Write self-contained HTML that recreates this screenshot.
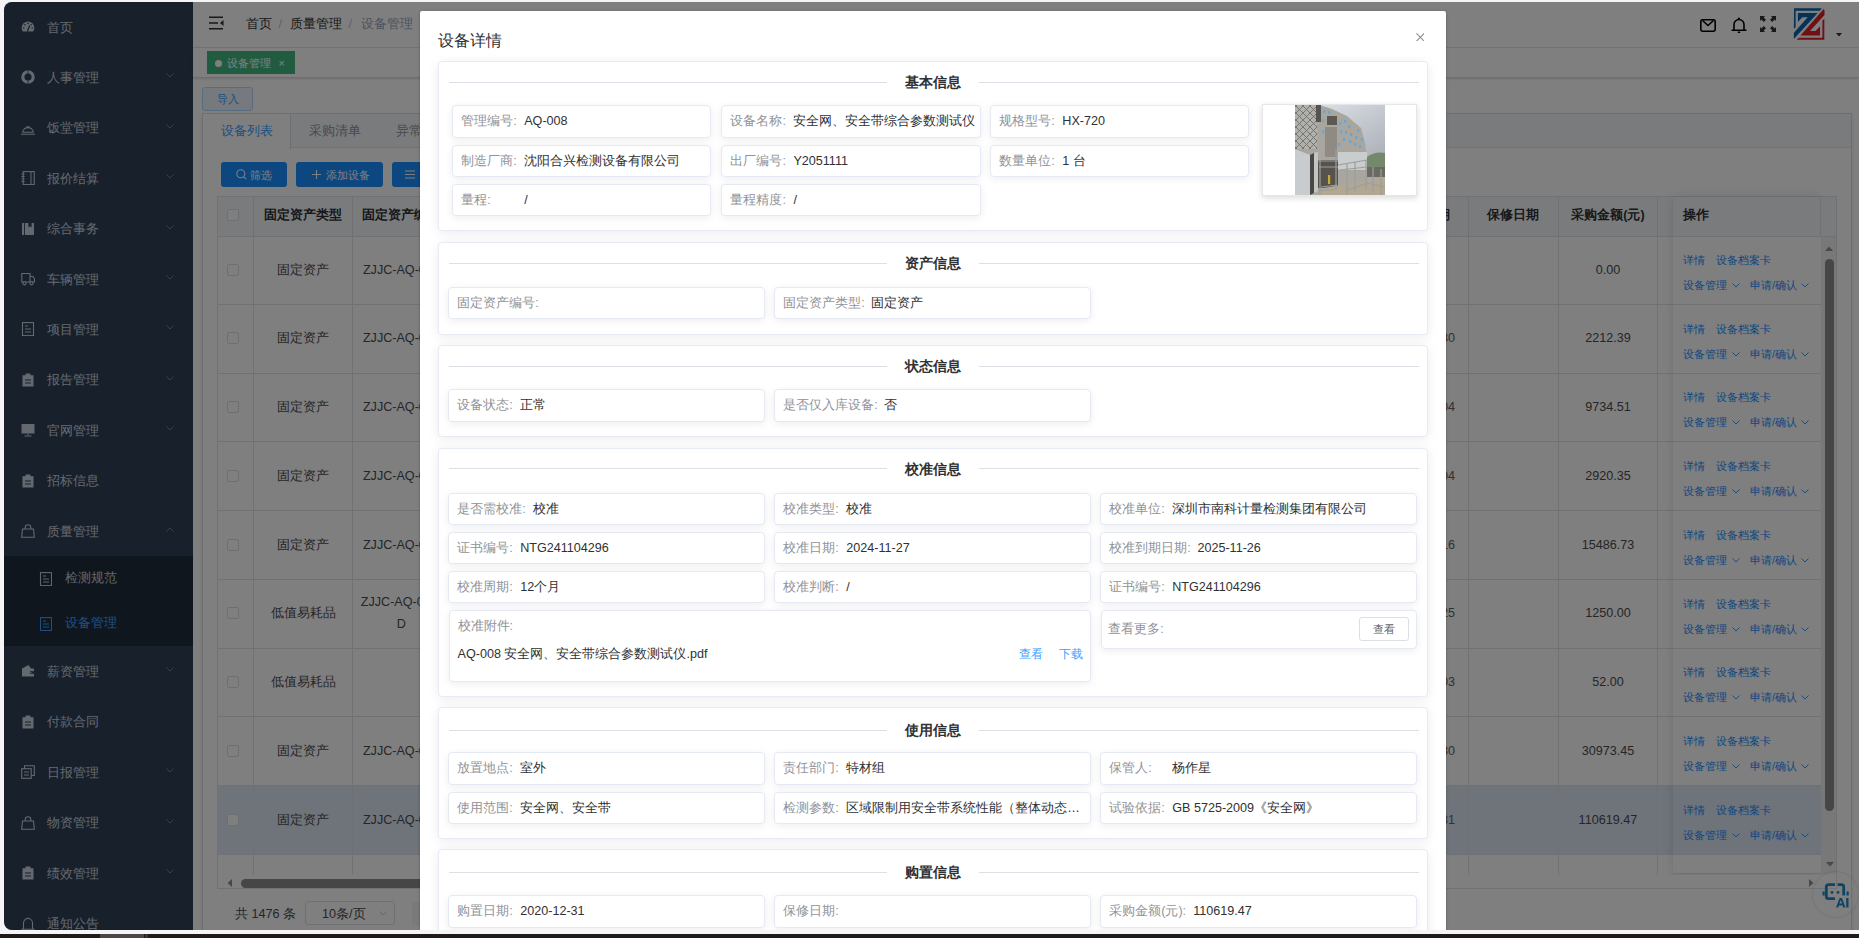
<!DOCTYPE html>
<html><head><meta charset="utf-8">
<style>
*{box-sizing:border-box;margin:0;padding:0}
html,body{width:1859px;height:938px;overflow:hidden;background:#f5f5f5;font-family:"Liberation Sans",sans-serif;font-size:12.6px;color:#303133}
.abs{position:absolute}
#taskbar{position:absolute;left:0;top:934px;width:1859px;height:4px;background:#1f1b1b}
#win{position:absolute;left:4px;top:2px;width:1855px;height:928px;overflow:hidden;border-radius:8px 0 0 8px;background:#fff}
#side{position:absolute;left:0;top:0;width:189px;height:928px;background:#304156}
.mi{position:absolute;left:0;width:189px;height:50.4px;color:#c8d2de;font-size:12.6px;line-height:50.4px}
.mi .t{position:absolute;left:43.3px;top:0.7px}
.mi .ic{position:absolute;left:17px;top:18px;width:14px;height:14px}
.mi .ch{position:absolute;left:162px;top:21px;width:8px;height:5px}
#sub{position:absolute;left:0;top:554.4px;width:189px;height:90px;background:#1f2d3d}
.si{position:absolute;left:0;width:189px;height:45px;line-height:45px;color:#bfcbd9}
.si .t{position:absolute;left:61px}
.si .ic{position:absolute;left:35px;top:16px;width:13px;height:14px}
#main{position:absolute;left:189px;top:0;width:1666px;height:928px;background:#fff}
#overlay{position:absolute;left:0;top:0;width:1855px;height:928px;background:rgba(0,0,0,.5)}
#modal{position:absolute;left:416px;top:9px;width:1026px;height:1100px;background:#fff;border-radius:2px;box-shadow:0 1px 3px rgba(0,0,0,.3)}
.card{position:absolute;background:#fff;border:1px solid #e6ebf5;border-radius:4px;box-shadow:0 2px 12px 0 rgba(0,0,0,.08)}
.sect{font-size:14.4px;font-weight:bold;color:#303133}
.ib{position:absolute;background:#fff;border:1px solid #e4e9f4;border-radius:4px;box-shadow:0 2px 8px 0 rgba(0,0,0,.07);padding-left:8px;white-space:nowrap;overflow:hidden}
.lb{color:#909399;display:inline-block}
.vl{color:#303133}
</style></head><body>
<div id="taskbar"></div><div class="abs" style="left:100px;top:934px;width:43.5px;height:4px;background:#4b4747"></div><div class="abs" style="left:144.7px;top:934px;width:3px;height:4px;background:#3b3737"></div>
<div id="win">
  <div id="side"><div class="mi" style="top:0.0px"><svg class="ic" viewBox="0 0 14 14"><path d="M1.9,11.6 A6.3,6.3 0 1 1 12.1,11.6 Z" fill="currentColor"/><circle cx="7" cy="3.4" r="0.8" fill="#304156"/><circle cx="3.9" cy="4.7" r="0.8" fill="#304156"/><circle cx="10.1" cy="4.7" r="0.8" fill="#304156"/><circle cx="2.8" cy="8" r="0.8" fill="#304156"/><circle cx="11.2" cy="8" r="0.8" fill="#304156"/><path d="M6.4,11.6 L8.6,5.5" stroke="#304156" stroke-width="1.3"/></svg><span class="t">首页</span></div>
<div class="mi" style="top:50.4px"><svg class="ic" viewBox="0 0 14 14"><circle cx="7" cy="7" r="5.2" fill="none" stroke="currentColor" stroke-width="3.2"/><rect x="6.6" y="0" width="0.8" height="14" fill="#304156"/></svg><span class="t">人事管理</span><svg class="ch" viewBox="0 0 8 5"><path d="M0.5,0.5 L4,4 L7.5,0.5" fill="none" stroke="#7c8797" stroke-width="0.9"/></svg></div>
<div class="mi" style="top:100.8px"><svg class="ic" viewBox="0 0 14 14"><path d="M1.8,11.2 A5.2,4.6 0 0 1 12.2,11.2 Z" fill="none" stroke="currentColor" stroke-width="1.1"/><path d="M-0.5,13.2 H14.5" stroke="currentColor" stroke-width="1.1"/><path d="M5.5,5.8 H8.5" stroke="currentColor" stroke-width="1.1"/></svg><span class="t">饭堂管理</span><svg class="ch" viewBox="0 0 8 5"><path d="M0.5,0.5 L4,4 L7.5,0.5" fill="none" stroke="#7c8797" stroke-width="0.9"/></svg></div>
<div class="mi" style="top:151.2px"><svg class="ic" viewBox="0 0 14 14"><rect x="2.2" y="0.6" width="11" height="13" fill="none" stroke="currentColor" stroke-width="1.1"/><path d="M10,0.6 V13.6" stroke="currentColor" stroke-width="1"/><path d="M0.5,3 H3.6 M0.5,5.5 H3.6 M0.5,8 H3.6 M0.5,10.5 H3.6" stroke="currentColor" stroke-width="1"/></svg><span class="t">报价结算</span><svg class="ch" viewBox="0 0 8 5"><path d="M0.5,0.5 L4,4 L7.5,0.5" fill="none" stroke="#7c8797" stroke-width="0.9"/></svg></div>
<div class="mi" style="top:201.6px"><svg class="ic" viewBox="0 0 14 14"><path d="M1,1 H13 V13 H1 Z" fill="currentColor"/><path d="M7.4,1 V5.5 L9,4.3 L10.6,5.5 V1" fill="#304156"/><rect x="3" y="1" width="0.9" height="12" fill="#304156"/></svg><span class="t">综合事务</span><svg class="ch" viewBox="0 0 8 5"><path d="M0.5,0.5 L4,4 L7.5,0.5" fill="none" stroke="#7c8797" stroke-width="0.9"/></svg></div>
<div class="mi" style="top:252.0px"><svg class="ic" viewBox="0 0 14 14"><path d="M0.8,1.5 H9 V10 H0.8 Z M9,4.5 H12 L13.5,7 V10 H9" fill="none" stroke="currentColor" stroke-width="1.1"/><circle cx="3.5" cy="11.3" r="1.6" fill="#304156" stroke="currentColor" stroke-width="1.1"/><circle cx="10.5" cy="11.3" r="1.6" fill="#304156" stroke="currentColor" stroke-width="1.1"/></svg><span class="t">车辆管理</span><svg class="ch" viewBox="0 0 8 5"><path d="M0.5,0.5 L4,4 L7.5,0.5" fill="none" stroke="#7c8797" stroke-width="0.9"/></svg></div>
<div class="mi" style="top:302.4px"><svg class="ic" viewBox="0 0 14 14"><rect x="1.5" y="0.6" width="11" height="13" fill="none" stroke="currentColor" stroke-width="1.1"/><path d="M4,4 H7 M4,7 H10 M4,10 H10" stroke="currentColor" stroke-width="1.1"/></svg><span class="t">项目管理</span><svg class="ch" viewBox="0 0 8 5"><path d="M0.5,0.5 L4,4 L7.5,0.5" fill="none" stroke="#7c8797" stroke-width="0.9"/></svg></div>
<div class="mi" style="top:352.8px"><svg class="ic" viewBox="0 0 14 14"><path d="M1.5,2.2 H12.5 V13.5 H1.5 Z" fill="currentColor"/><rect x="4.5" y="0.5" width="5" height="2.6" fill="currentColor"/><path d="M4,7 H10 M4,10 H10" stroke="#304156" stroke-width="1.1"/></svg><span class="t">报告管理</span><svg class="ch" viewBox="0 0 8 5"><path d="M0.5,0.5 L4,4 L7.5,0.5" fill="none" stroke="#7c8797" stroke-width="0.9"/></svg></div>
<div class="mi" style="top:403.2px"><svg class="ic" viewBox="0 0 14 14"><rect x="0.5" y="1" width="13" height="9.5" fill="currentColor"/><path d="M7,10.5 V12.5 M3.5,13 H10.5" stroke="currentColor" stroke-width="1"/></svg><span class="t">官网管理</span><svg class="ch" viewBox="0 0 8 5"><path d="M0.5,0.5 L4,4 L7.5,0.5" fill="none" stroke="#7c8797" stroke-width="0.9"/></svg></div>
<div class="mi" style="top:453.6px"><svg class="ic" viewBox="0 0 14 14"><path d="M1.5,2.2 H12.5 V13.5 H1.5 Z" fill="currentColor"/><rect x="4.5" y="0.5" width="5" height="2.6" fill="currentColor"/><path d="M4,7 H10 M4,10 H10" stroke="#304156" stroke-width="1.1"/></svg><span class="t">招标信息</span></div>
<div class="mi" style="top:504.0px"><svg class="ic" viewBox="0 0 14 14"><path d="M1.5,5 H12.5 L13.3,13.3 H0.7 Z" fill="none" stroke="currentColor" stroke-width="1.1"/><path d="M4.2,5 V3.5 A2.8,2.8 0 0 1 9.8,3.5 V5" fill="none" stroke="currentColor" stroke-width="1.1"/></svg><span class="t">质量管理</span><svg class="ch" viewBox="0 0 8 5"><path d="M0.5,4.5 L4,1 L7.5,4.5" fill="none" stroke="#7c8797" stroke-width="0.9"/></svg></div>
<div id="sub"><div class="si" style="top:0"><svg class="ic" viewBox="0 0 13 14"><rect x="1.5" y="0.6" width="11" height="13" fill="none" stroke="currentColor" stroke-width="1.1"/><path d="M4,4 H7 M4,7 H10 M4,10 H10" stroke="currentColor" stroke-width="1.1"/></svg><span class="t">检测规范</span></div><div class="si act" style="top:45px;color:#409eff"><svg class="ic" viewBox="0 0 13 14"><rect x="1.5" y="0.6" width="11" height="13" fill="none" stroke="currentColor" stroke-width="1.1"/><path d="M4,4 H7 M4,7 H10 M4,10 H10" stroke="currentColor" stroke-width="1.1"/></svg><span class="t">设备管理</span></div></div>
<div class="mi" style="top:644.4px"><svg class="ic" viewBox="0 0 14 14"><path d="M1,4.5 L7.5,1 L10,4.5 H13 V12.5 H1 Z" fill="currentColor"/><path d="M9,7.2 H13 V9.8 H9 Z" fill="#304156"/><circle cx="10" cy="8.5" r="0.7" fill="currentColor"/></svg><span class="t">薪资管理</span><svg class="ch" viewBox="0 0 8 5"><path d="M0.5,0.5 L4,4 L7.5,0.5" fill="none" stroke="#7c8797" stroke-width="0.9"/></svg></div>
<div class="mi" style="top:694.8px"><svg class="ic" viewBox="0 0 14 14"><path d="M1.5,2.2 H12.5 V13.5 H1.5 Z" fill="currentColor"/><rect x="4.5" y="0.5" width="5" height="2.6" fill="currentColor"/><path d="M4,7 H10 M4,10 H10" stroke="#304156" stroke-width="1.1"/></svg><span class="t">付款合同</span></div>
<div class="mi" style="top:745.2px"><svg class="ic" viewBox="0 0 14 14"><rect x="0.7" y="3.7" width="9.5" height="9.6" fill="none" stroke="currentColor" stroke-width="1.1"/><path d="M3.5,3.7 V0.7 H13.3 V10.5 H10.2" fill="none" stroke="currentColor" stroke-width="1.1"/><path d="M3,7 H8 M3,10 H8" stroke="currentColor" stroke-width="1.1"/></svg><span class="t">日报管理</span><svg class="ch" viewBox="0 0 8 5"><path d="M0.5,0.5 L4,4 L7.5,0.5" fill="none" stroke="#7c8797" stroke-width="0.9"/></svg></div>
<div class="mi" style="top:795.6px"><svg class="ic" viewBox="0 0 14 14"><path d="M1.5,5 H12.5 L13.3,13.3 H0.7 Z" fill="none" stroke="currentColor" stroke-width="1.1"/><path d="M4.2,5 V3.5 A2.8,2.8 0 0 1 9.8,3.5 V5" fill="none" stroke="currentColor" stroke-width="1.1"/></svg><span class="t">物资管理</span><svg class="ch" viewBox="0 0 8 5"><path d="M0.5,0.5 L4,4 L7.5,0.5" fill="none" stroke="#7c8797" stroke-width="0.9"/></svg></div>
<div class="mi" style="top:846.0px"><svg class="ic" viewBox="0 0 14 14"><path d="M1.5,2.2 H12.5 V13.5 H1.5 Z" fill="currentColor"/><rect x="4.5" y="0.5" width="5" height="2.6" fill="currentColor"/><path d="M4,7 H10 M4,10 H10" stroke="#304156" stroke-width="1.1"/></svg><span class="t">绩效管理</span><svg class="ch" viewBox="0 0 8 5"><path d="M0.5,0.5 L4,4 L7.5,0.5" fill="none" stroke="#7c8797" stroke-width="0.9"/></svg></div>
<div class="mi" style="top:896.4px"><svg class="ic" viewBox="0 0 14 14"><path d="M2.5,13 V7 A4.5,4.5 0 0 1 11.5,7 V13" fill="none" stroke="currentColor" stroke-width="1.1"/><path d="M0.3,13.3 H13.7" stroke="currentColor" stroke-width="1.1"/><path d="M7,1.5 V2.5" stroke="currentColor" stroke-width="1.1"/></svg><span class="t">通知公告</span></div></div>
  <div id="main"><div class="abs" style="left:0.00px;top:0.00px;width:1666.00px;height:46.00px;background:#fff;border-bottom:1px solid #ececec"></div>
<svg class="abs" style="left:16px;top:14px" width="15" height="14" viewBox="0 0 15 14"><path d="M0,1.3 H14 M0,7 H9 M0,12.7 H14" stroke="#303133" stroke-width="1.6"/><path d="M14.5,4 L11,7 L14.5,10 Z" fill="#303133"/></svg>
<div class="abs" style="left:52.80px;top:13.50px;line-height:16px;white-space:nowrap;color:#303133">首页</div>
<div class="abs" style="left:85.50px;top:13.50px;line-height:16px;white-space:nowrap;color:#c0c4cc">/</div>
<div class="abs" style="left:97.00px;top:13.50px;line-height:16px;white-space:nowrap;color:#303133">质量管理</div>
<div class="abs" style="left:155.50px;top:13.50px;line-height:16px;white-space:nowrap;color:#c0c4cc">/</div>
<div class="abs" style="left:167.70px;top:13.50px;line-height:16px;white-space:nowrap;color:#97a8be">设备管理</div>
<svg class="abs" style="left:1507px;top:17px" width="16" height="13" viewBox="0 0 16 13"><rect x="0.8" y="0.8" width="14.4" height="11.4" rx="1.6" fill="none" stroke="#000" stroke-width="1.6"/><path d="M2.5,1.5 L8,6.5 L13.5,1.5" fill="none" stroke="#000" stroke-width="1.6"/></svg>
<svg class="abs" style="left:1538px;top:15px" width="16" height="16" viewBox="0 0 16 16"><path d="M3,13 V7.5 A5,5 0 0 1 13,7.5 V13" fill="none" stroke="#000" stroke-width="1.6"/><path d="M0.5,13.2 H15.5" stroke="#000" stroke-width="1.6"/><circle cx="8" cy="1.6" r="1.1" fill="#000"/><path d="M6.8,15.3 H9.2" stroke="#000" stroke-width="1.4"/></svg>
<svg class="abs" style="left:1567px;top:14px" width="16" height="16" viewBox="0 0 16 16"><g fill="#303133"><path d="M0,0 H5 L3.6,1.4 L6,3.8 L3.8,6 L1.4,3.6 L0,5 Z"/><path d="M16,0 V5 L14.6,3.6 L12.2,6 L10,3.8 L12.4,1.4 L11,0 Z"/><path d="M0,16 V11 L1.4,12.4 L3.8,10 L6,12.2 L3.6,14.6 L5,16 Z"/><path d="M16,16 H11 L12.4,14.6 L10,12.2 L12.2,10 L14.6,12.4 L16,11 Z"/></g></svg>
<svg class="abs" style="left:1597px;top:3px" width="40" height="40" viewBox="0 0 938 938"><path d="M95,75 H745 L700,132 H132 V520 L90,565 Z" fill="#0a66b0"/><path d="M185,185 H650 L90,800 V650 L415,285 H290 L185,400 Z" fill="#0a66b0"/><path d="M790,95 L810,130 V235 L470,610 H600 L705,500 V715 H245 Z" fill="#e01e28"/><path d="M805,320 V815 H155 L205,770 H760 V365 Z" fill="#e01e28"/></svg>
<svg class="abs" style="left:1643px;top:31px" width="6" height="4" viewBox="0 0 6 4"><path d="M0,0 H6 L3,3.5 Z" fill="#303133"/></svg>
<div class="abs" style="left:0.00px;top:46.00px;width:1666.00px;height:30.00px;background:#fff;border-bottom:1px solid #d8dce5;box-shadow:0 1px 3px 0 rgba(0,0,0,.12),0 0 3px 0 rgba(0,0,0,.04)"></div>
<div class="abs" style="left:14.00px;top:49.00px;width:88.00px;height:23.00px;background:#42b983;border:1px solid #42b983"></div>
<div class="abs" style="left:22px;top:58px;width:7px;height:7px;border-radius:50%;background:#fff"></div>
<div class="abs" style="left:34.00px;top:53.00px;line-height:16px;white-space:nowrap;color:#fff;font-size:10.8px">设备管理</div>
<div class="abs" style="left:85.50px;top:53.00px;line-height:16px;white-space:nowrap;color:#fff;font-size:10.8px">×</div>
<div class="abs" style="left:9.00px;top:85.00px;width:51.00px;height:24.00px;background:#ecf5ff;border:1px solid #b3d8ff;border-radius:3px"></div>
<div class="abs" style="left:9.50px;top:89.00px;width:50px;text-align:center;line-height:16px;white-space:nowrap;color:#409eff;font-size:10.8px">导入</div>
<div class="abs" style="left:9.00px;top:110.50px;width:1650.00px;height:900.00px;background:#fff;border:1px solid #dcdfe6;box-shadow:0 2px 4px 0 rgba(0,0,0,.12)"></div>
<div class="abs" style="left:10.00px;top:111.50px;width:1648.00px;height:34.50px;background:#f5f7fa;border-bottom:1px solid #e4e7ed"></div>
<div class="abs" style="left:10.00px;top:111.50px;width:88.00px;height:35.00px;background:#fff;border-right:1px solid #dcdfe6"></div>
<div class="abs" style="left:27.90px;top:120.50px;line-height:16px;white-space:nowrap;color:#409eff">设备列表</div>
<div class="abs" style="left:115.80px;top:120.50px;line-height:16px;white-space:nowrap;color:#909399">采购清单</div>
<div class="abs" style="left:203.20px;top:120.50px;line-height:16px;white-space:nowrap;color:#909399">异常处理</div>
<div class="abs" style="left:28.00px;top:160.00px;width:66.00px;height:25.00px;background:#1890ff;border-radius:3px"></div>
<svg class="abs" style="left:42.5px;top:167px" width="11" height="11" viewBox="0 0 11 11"><circle cx="4.8" cy="4.8" r="4" fill="none" stroke="#fff" stroke-width="1.1"/><path d="M7.8,7.8 L10.2,10.2" stroke="#fff" stroke-width="1.1"/></svg>
<div class="abs" style="left:57.40px;top:164.50px;line-height:16px;white-space:nowrap;color:#fff;font-size:10.8px">筛选</div>
<div class="abs" style="left:103.00px;top:160.00px;width:87.00px;height:25.00px;background:#1890ff;border-radius:3px"></div>
<svg class="abs" style="left:118.5px;top:168px" width="9" height="9" viewBox="0 0 9 9"><path d="M4.5,0 V9 M0,4.5 H9" stroke="#fff" stroke-width="1.1"/></svg>
<div class="abs" style="left:132.60px;top:164.50px;line-height:16px;white-space:nowrap;color:#fff;font-size:10.8px">添加设备</div>
<div class="abs" style="left:199.00px;top:160.00px;width:90.00px;height:25.00px;background:#1890ff;border-radius:3px"></div>
<svg class="abs" style="left:212px;top:168px" width="10" height="9" viewBox="0 0 10 9"><path d="M0,1 H10 M0,4.5 H10 M0,8 H10" stroke="#fff" stroke-width="1.2"/></svg>
<div class="abs" style="left:24.00px;top:194.20px;width:1619.50px;height:692.80px;background:#fff;border:1px solid #dfe3ea"></div>
<div class="abs" style="left:25.00px;top:234.00px;width:1617.50px;height:68.75px;background:#fff;border-bottom:1px solid #dfe3ea"></div>
<div class="abs" style="left:25.00px;top:302.75px;width:1617.50px;height:68.75px;background:#fff;border-bottom:1px solid #dfe3ea"></div>
<div class="abs" style="left:25.00px;top:371.50px;width:1617.50px;height:68.75px;background:#fff;border-bottom:1px solid #dfe3ea"></div>
<div class="abs" style="left:25.00px;top:440.25px;width:1617.50px;height:68.75px;background:#fff;border-bottom:1px solid #dfe3ea"></div>
<div class="abs" style="left:25.00px;top:509.00px;width:1617.50px;height:68.75px;background:#fff;border-bottom:1px solid #dfe3ea"></div>
<div class="abs" style="left:25.00px;top:577.75px;width:1617.50px;height:68.75px;background:#fff;border-bottom:1px solid #dfe3ea"></div>
<div class="abs" style="left:25.00px;top:646.50px;width:1617.50px;height:68.75px;background:#fff;border-bottom:1px solid #dfe3ea"></div>
<div class="abs" style="left:25.00px;top:715.25px;width:1617.50px;height:68.75px;background:#fff;border-bottom:1px solid #dfe3ea"></div>
<div class="abs" style="left:25.00px;top:784.00px;width:1617.50px;height:68.75px;background:#dee8f6;border-bottom:1px solid #dfe3ea"></div>
<div class="abs" style="left:25.00px;top:852.75px;width:1617.50px;height:20.25px;background:#fff;"></div>
<div class="abs" style="left:25.00px;top:195.20px;width:1617.50px;height:39.80px;background:#f5f7fa;border-bottom:1px solid #dfe3ea"></div>
<div class="abs" style="left:60.00px;top:194.20px;width:1.00px;height:678.80px;background:#dfe3ea"></div>
<div class="abs" style="left:159.00px;top:194.20px;width:1.00px;height:678.80px;background:#dfe3ea"></div>
<div class="abs" style="left:256.80px;top:194.20px;width:1.00px;height:678.80px;background:#dfe3ea"></div>
<div class="abs" style="left:1274.90px;top:194.20px;width:1.00px;height:678.80px;background:#dfe3ea"></div>
<div class="abs" style="left:1364.90px;top:194.20px;width:1.00px;height:678.80px;background:#dfe3ea"></div>
<div class="abs" style="left:1463.90px;top:194.20px;width:1.00px;height:678.80px;background:#dfe3ea"></div>
<div class="abs" style="left:10.00px;top:205.10px;width:200px;text-align:center;line-height:16px;white-space:nowrap;color:#303133;font-weight:bold">固定资产类型</div>
<div class="abs" style="left:108.40px;top:205.10px;width:200px;text-align:center;line-height:16px;white-space:nowrap;color:#303133;font-weight:bold">固定资产编号</div>
<div class="abs" style="left:1220.40px;top:205.10px;width:200px;text-align:center;line-height:16px;white-space:nowrap;color:#303133;font-weight:bold">保修日期</div>
<div class="abs" style="left:1314.90px;top:205.10px;width:200px;text-align:center;line-height:16px;white-space:nowrap;color:#303133;font-weight:bold">采购金额(元)</div>
<div class="abs" style="left:1156.5px;top:205.10px;width:100px;text-align:right;line-height:16px;color:#303133;font-weight:bold">出厂日期</div>
<div class="abs" style="left:33.80px;top:207.00px;width:12.00px;height:12.00px;background:#fff;border:1px solid #dcdfe6;border-radius:2px"></div>
<div class="abs" style="left:33.80px;top:261.57px;width:12.00px;height:12.00px;background:#fff;border:1px solid #dcdfe6;border-radius:2px"></div>
<div class="abs" style="left:10.00px;top:259.68px;width:200px;text-align:center;line-height:16px;white-space:nowrap;color:#4a4c50">固定资产</div>
<div class="abs" style="left:108.40px;top:259.68px;width:200px;text-align:center;line-height:16px;white-space:nowrap;color:#4a4c50">ZJJC-AQ-008</div>
<div class="abs" style="left:1314.90px;top:259.68px;width:200px;text-align:center;line-height:16px;white-space:nowrap;color:#4a4c50">0.00</div>
<div class="abs" style="left:33.80px;top:330.32px;width:12.00px;height:12.00px;background:#fff;border:1px solid #dcdfe6;border-radius:2px"></div>
<div class="abs" style="left:10.00px;top:328.43px;width:200px;text-align:center;line-height:16px;white-space:nowrap;color:#4a4c50">固定资产</div>
<div class="abs" style="left:108.40px;top:328.43px;width:200px;text-align:center;line-height:16px;white-space:nowrap;color:#4a4c50">ZJJC-AQ-007</div>
<div class="abs" style="left:1162px;top:328.43px;width:100px;text-align:right;line-height:16px;color:#606266">2020-12-30</div>
<div class="abs" style="left:1314.90px;top:328.43px;width:200px;text-align:center;line-height:16px;white-space:nowrap;color:#4a4c50">2212.39</div>
<div class="abs" style="left:33.80px;top:399.07px;width:12.00px;height:12.00px;background:#fff;border:1px solid #dcdfe6;border-radius:2px"></div>
<div class="abs" style="left:10.00px;top:397.18px;width:200px;text-align:center;line-height:16px;white-space:nowrap;color:#4a4c50">固定资产</div>
<div class="abs" style="left:108.40px;top:397.18px;width:200px;text-align:center;line-height:16px;white-space:nowrap;color:#4a4c50">ZJJC-AQ-006</div>
<div class="abs" style="left:1162px;top:397.18px;width:100px;text-align:right;line-height:16px;color:#606266">2020-12-04</div>
<div class="abs" style="left:1314.90px;top:397.18px;width:200px;text-align:center;line-height:16px;white-space:nowrap;color:#4a4c50">9734.51</div>
<div class="abs" style="left:33.80px;top:467.82px;width:12.00px;height:12.00px;background:#fff;border:1px solid #dcdfe6;border-radius:2px"></div>
<div class="abs" style="left:10.00px;top:465.93px;width:200px;text-align:center;line-height:16px;white-space:nowrap;color:#4a4c50">固定资产</div>
<div class="abs" style="left:108.40px;top:465.93px;width:200px;text-align:center;line-height:16px;white-space:nowrap;color:#4a4c50">ZJJC-AQ-005</div>
<div class="abs" style="left:1162px;top:465.93px;width:100px;text-align:right;line-height:16px;color:#606266">2020-12-04</div>
<div class="abs" style="left:1314.90px;top:465.93px;width:200px;text-align:center;line-height:16px;white-space:nowrap;color:#4a4c50">2920.35</div>
<div class="abs" style="left:33.80px;top:536.57px;width:12.00px;height:12.00px;background:#fff;border:1px solid #dcdfe6;border-radius:2px"></div>
<div class="abs" style="left:10.00px;top:534.67px;width:200px;text-align:center;line-height:16px;white-space:nowrap;color:#4a4c50">固定资产</div>
<div class="abs" style="left:108.40px;top:534.67px;width:200px;text-align:center;line-height:16px;white-space:nowrap;color:#4a4c50">ZJJC-AQ-004</div>
<div class="abs" style="left:1162px;top:534.67px;width:100px;text-align:right;line-height:16px;color:#606266">2020-12-16</div>
<div class="abs" style="left:1314.90px;top:534.67px;width:200px;text-align:center;line-height:16px;white-space:nowrap;color:#4a4c50">15486.73</div>
<div class="abs" style="left:33.80px;top:605.32px;width:12.00px;height:12.00px;background:#fff;border:1px solid #dcdfe6;border-radius:2px"></div>
<div class="abs" style="left:10.00px;top:603.42px;width:200px;text-align:center;line-height:16px;white-space:nowrap;color:#4a4c50">低值易耗品</div>
<div class="abs" style="left:108.40px;top:592.42px;width:200px;text-align:center;line-height:16px;white-space:nowrap;color:#4a4c50">ZJJC-AQ-003-</div>
<div class="abs" style="left:108.40px;top:614.42px;width:200px;text-align:center;line-height:16px;white-space:nowrap;color:#4a4c50">D</div>
<div class="abs" style="left:1162px;top:603.42px;width:100px;text-align:right;line-height:16px;color:#606266">2020-12-25</div>
<div class="abs" style="left:1314.90px;top:603.42px;width:200px;text-align:center;line-height:16px;white-space:nowrap;color:#4a4c50">1250.00</div>
<div class="abs" style="left:33.80px;top:674.07px;width:12.00px;height:12.00px;background:#fff;border:1px solid #dcdfe6;border-radius:2px"></div>
<div class="abs" style="left:10.00px;top:672.17px;width:200px;text-align:center;line-height:16px;white-space:nowrap;color:#4a4c50">低值易耗品</div>
<div class="abs" style="left:1162px;top:672.17px;width:100px;text-align:right;line-height:16px;color:#606266">2020-12-03</div>
<div class="abs" style="left:1314.90px;top:672.17px;width:200px;text-align:center;line-height:16px;white-space:nowrap;color:#4a4c50">52.00</div>
<div class="abs" style="left:33.80px;top:742.82px;width:12.00px;height:12.00px;background:#fff;border:1px solid #dcdfe6;border-radius:2px"></div>
<div class="abs" style="left:10.00px;top:740.92px;width:200px;text-align:center;line-height:16px;white-space:nowrap;color:#4a4c50">固定资产</div>
<div class="abs" style="left:108.40px;top:740.92px;width:200px;text-align:center;line-height:16px;white-space:nowrap;color:#4a4c50">ZJJC-AQ-002</div>
<div class="abs" style="left:1162px;top:740.92px;width:100px;text-align:right;line-height:16px;color:#606266">2020-12-30</div>
<div class="abs" style="left:1314.90px;top:740.92px;width:200px;text-align:center;line-height:16px;white-space:nowrap;color:#4a4c50">30973.45</div>
<div class="abs" style="left:33.80px;top:811.57px;width:12.00px;height:12.00px;background:#fff;border:1px solid #dcdfe6;border-radius:2px"></div>
<div class="abs" style="left:10.00px;top:809.67px;width:200px;text-align:center;line-height:16px;white-space:nowrap;color:#4a4c50">固定资产</div>
<div class="abs" style="left:108.40px;top:809.67px;width:200px;text-align:center;line-height:16px;white-space:nowrap;color:#4a4c50">ZJJC-AQ-001</div>
<div class="abs" style="left:1162px;top:809.67px;width:100px;text-align:right;line-height:16px;color:#606266">2020-12-31</div>
<div class="abs" style="left:1314.90px;top:809.67px;width:200px;text-align:center;line-height:16px;white-space:nowrap;color:#4a4c50">110619.47</div>
<div class="abs" style="left:1479.50px;top:195.20px;width:148.50px;height:676.80px;background:#fff;box-shadow:0 0 10px rgba(0,0,0,.12);overflow:hidden"></div>
<div class="abs" style="left:1479.50px;top:234.00px;width:148.50px;height:68.75px;background:#fff;border-bottom:1px solid #dfe3ea"></div>
<div class="abs" style="left:1479.50px;top:302.75px;width:148.50px;height:68.75px;background:#fff;border-bottom:1px solid #dfe3ea"></div>
<div class="abs" style="left:1479.50px;top:371.50px;width:148.50px;height:68.75px;background:#fff;border-bottom:1px solid #dfe3ea"></div>
<div class="abs" style="left:1479.50px;top:440.25px;width:148.50px;height:68.75px;background:#fff;border-bottom:1px solid #dfe3ea"></div>
<div class="abs" style="left:1479.50px;top:509.00px;width:148.50px;height:68.75px;background:#fff;border-bottom:1px solid #dfe3ea"></div>
<div class="abs" style="left:1479.50px;top:577.75px;width:148.50px;height:68.75px;background:#fff;border-bottom:1px solid #dfe3ea"></div>
<div class="abs" style="left:1479.50px;top:646.50px;width:148.50px;height:68.75px;background:#fff;border-bottom:1px solid #dfe3ea"></div>
<div class="abs" style="left:1479.50px;top:715.25px;width:148.50px;height:68.75px;background:#fff;border-bottom:1px solid #dfe3ea"></div>
<div class="abs" style="left:1479.50px;top:784.00px;width:148.50px;height:68.75px;background:#dee8f6;border-bottom:1px solid #dfe3ea"></div>
<div class="abs" style="left:1479.50px;top:852.75px;width:148.50px;height:19.25px;background:#fff;border-bottom:1px solid #dfe3ea"></div>
<div class="abs" style="left:1479.50px;top:195.20px;width:148.50px;height:39.80px;background:#f5f7fa;border-bottom:1px solid #dfe3ea;border-right:1px solid #dfe3ea"></div>
<div class="abs" style="left:1489.70px;top:205.10px;line-height:16px;white-space:nowrap;color:#303133;font-weight:bold">操作</div>
<div class="abs" style="left:1479.50px;top:194.20px;width:148.50px;height:677.80px;overflow:hidden">
<div class="abs" style="left:10.90px;top:55.80px;line-height:16px;white-space:nowrap;color:#1890ff;font-size:10.8px">详情</div><div class="abs" style="left:43.60px;top:55.80px;line-height:16px;white-space:nowrap;color:#1890ff;font-size:10.8px">设备档案卡</div><div class="abs" style="left:10.20px;top:80.80px;line-height:16px;white-space:nowrap;color:#1890ff;font-size:10.8px">设备管理</div><svg class="abs" style="left:59.20px;top:86.80px" width="8" height="5" viewBox="0 0 8 5"><path d="M0.5,0.5 L4,4 L7.5,0.5" fill="none" stroke="#1890ff" stroke-width="0.9"/></svg><div class="abs" style="left:77.50px;top:80.80px;line-height:16px;white-space:nowrap;color:#1890ff;font-size:10.8px">申请/确认</div><svg class="abs" style="left:128.00px;top:86.80px" width="8" height="5" viewBox="0 0 8 5"><path d="M0.5,0.5 L4,4 L7.5,0.5" fill="none" stroke="#1890ff" stroke-width="0.9"/></svg><div class="abs" style="left:10.90px;top:124.55px;line-height:16px;white-space:nowrap;color:#1890ff;font-size:10.8px">详情</div><div class="abs" style="left:43.60px;top:124.55px;line-height:16px;white-space:nowrap;color:#1890ff;font-size:10.8px">设备档案卡</div><div class="abs" style="left:10.20px;top:149.55px;line-height:16px;white-space:nowrap;color:#1890ff;font-size:10.8px">设备管理</div><svg class="abs" style="left:59.20px;top:155.55px" width="8" height="5" viewBox="0 0 8 5"><path d="M0.5,0.5 L4,4 L7.5,0.5" fill="none" stroke="#1890ff" stroke-width="0.9"/></svg><div class="abs" style="left:77.50px;top:149.55px;line-height:16px;white-space:nowrap;color:#1890ff;font-size:10.8px">申请/确认</div><svg class="abs" style="left:128.00px;top:155.55px" width="8" height="5" viewBox="0 0 8 5"><path d="M0.5,0.5 L4,4 L7.5,0.5" fill="none" stroke="#1890ff" stroke-width="0.9"/></svg><div class="abs" style="left:10.90px;top:193.30px;line-height:16px;white-space:nowrap;color:#1890ff;font-size:10.8px">详情</div><div class="abs" style="left:43.60px;top:193.30px;line-height:16px;white-space:nowrap;color:#1890ff;font-size:10.8px">设备档案卡</div><div class="abs" style="left:10.20px;top:218.30px;line-height:16px;white-space:nowrap;color:#1890ff;font-size:10.8px">设备管理</div><svg class="abs" style="left:59.20px;top:224.30px" width="8" height="5" viewBox="0 0 8 5"><path d="M0.5,0.5 L4,4 L7.5,0.5" fill="none" stroke="#1890ff" stroke-width="0.9"/></svg><div class="abs" style="left:77.50px;top:218.30px;line-height:16px;white-space:nowrap;color:#1890ff;font-size:10.8px">申请/确认</div><svg class="abs" style="left:128.00px;top:224.30px" width="8" height="5" viewBox="0 0 8 5"><path d="M0.5,0.5 L4,4 L7.5,0.5" fill="none" stroke="#1890ff" stroke-width="0.9"/></svg><div class="abs" style="left:10.90px;top:262.05px;line-height:16px;white-space:nowrap;color:#1890ff;font-size:10.8px">详情</div><div class="abs" style="left:43.60px;top:262.05px;line-height:16px;white-space:nowrap;color:#1890ff;font-size:10.8px">设备档案卡</div><div class="abs" style="left:10.20px;top:287.05px;line-height:16px;white-space:nowrap;color:#1890ff;font-size:10.8px">设备管理</div><svg class="abs" style="left:59.20px;top:293.05px" width="8" height="5" viewBox="0 0 8 5"><path d="M0.5,0.5 L4,4 L7.5,0.5" fill="none" stroke="#1890ff" stroke-width="0.9"/></svg><div class="abs" style="left:77.50px;top:287.05px;line-height:16px;white-space:nowrap;color:#1890ff;font-size:10.8px">申请/确认</div><svg class="abs" style="left:128.00px;top:293.05px" width="8" height="5" viewBox="0 0 8 5"><path d="M0.5,0.5 L4,4 L7.5,0.5" fill="none" stroke="#1890ff" stroke-width="0.9"/></svg><div class="abs" style="left:10.90px;top:330.80px;line-height:16px;white-space:nowrap;color:#1890ff;font-size:10.8px">详情</div><div class="abs" style="left:43.60px;top:330.80px;line-height:16px;white-space:nowrap;color:#1890ff;font-size:10.8px">设备档案卡</div><div class="abs" style="left:10.20px;top:355.80px;line-height:16px;white-space:nowrap;color:#1890ff;font-size:10.8px">设备管理</div><svg class="abs" style="left:59.20px;top:361.80px" width="8" height="5" viewBox="0 0 8 5"><path d="M0.5,0.5 L4,4 L7.5,0.5" fill="none" stroke="#1890ff" stroke-width="0.9"/></svg><div class="abs" style="left:77.50px;top:355.80px;line-height:16px;white-space:nowrap;color:#1890ff;font-size:10.8px">申请/确认</div><svg class="abs" style="left:128.00px;top:361.80px" width="8" height="5" viewBox="0 0 8 5"><path d="M0.5,0.5 L4,4 L7.5,0.5" fill="none" stroke="#1890ff" stroke-width="0.9"/></svg><div class="abs" style="left:10.90px;top:399.55px;line-height:16px;white-space:nowrap;color:#1890ff;font-size:10.8px">详情</div><div class="abs" style="left:43.60px;top:399.55px;line-height:16px;white-space:nowrap;color:#1890ff;font-size:10.8px">设备档案卡</div><div class="abs" style="left:10.20px;top:424.55px;line-height:16px;white-space:nowrap;color:#1890ff;font-size:10.8px">设备管理</div><svg class="abs" style="left:59.20px;top:430.55px" width="8" height="5" viewBox="0 0 8 5"><path d="M0.5,0.5 L4,4 L7.5,0.5" fill="none" stroke="#1890ff" stroke-width="0.9"/></svg><div class="abs" style="left:77.50px;top:424.55px;line-height:16px;white-space:nowrap;color:#1890ff;font-size:10.8px">申请/确认</div><svg class="abs" style="left:128.00px;top:430.55px" width="8" height="5" viewBox="0 0 8 5"><path d="M0.5,0.5 L4,4 L7.5,0.5" fill="none" stroke="#1890ff" stroke-width="0.9"/></svg><div class="abs" style="left:10.90px;top:468.30px;line-height:16px;white-space:nowrap;color:#1890ff;font-size:10.8px">详情</div><div class="abs" style="left:43.60px;top:468.30px;line-height:16px;white-space:nowrap;color:#1890ff;font-size:10.8px">设备档案卡</div><div class="abs" style="left:10.20px;top:493.30px;line-height:16px;white-space:nowrap;color:#1890ff;font-size:10.8px">设备管理</div><svg class="abs" style="left:59.20px;top:499.30px" width="8" height="5" viewBox="0 0 8 5"><path d="M0.5,0.5 L4,4 L7.5,0.5" fill="none" stroke="#1890ff" stroke-width="0.9"/></svg><div class="abs" style="left:77.50px;top:493.30px;line-height:16px;white-space:nowrap;color:#1890ff;font-size:10.8px">申请/确认</div><svg class="abs" style="left:128.00px;top:499.30px" width="8" height="5" viewBox="0 0 8 5"><path d="M0.5,0.5 L4,4 L7.5,0.5" fill="none" stroke="#1890ff" stroke-width="0.9"/></svg><div class="abs" style="left:10.90px;top:537.05px;line-height:16px;white-space:nowrap;color:#1890ff;font-size:10.8px">详情</div><div class="abs" style="left:43.60px;top:537.05px;line-height:16px;white-space:nowrap;color:#1890ff;font-size:10.8px">设备档案卡</div><div class="abs" style="left:10.20px;top:562.05px;line-height:16px;white-space:nowrap;color:#1890ff;font-size:10.8px">设备管理</div><svg class="abs" style="left:59.20px;top:568.05px" width="8" height="5" viewBox="0 0 8 5"><path d="M0.5,0.5 L4,4 L7.5,0.5" fill="none" stroke="#1890ff" stroke-width="0.9"/></svg><div class="abs" style="left:77.50px;top:562.05px;line-height:16px;white-space:nowrap;color:#1890ff;font-size:10.8px">申请/确认</div><svg class="abs" style="left:128.00px;top:568.05px" width="8" height="5" viewBox="0 0 8 5"><path d="M0.5,0.5 L4,4 L7.5,0.5" fill="none" stroke="#1890ff" stroke-width="0.9"/></svg><div class="abs" style="left:10.90px;top:605.80px;line-height:16px;white-space:nowrap;color:#1890ff;font-size:10.8px">详情</div><div class="abs" style="left:43.60px;top:605.80px;line-height:16px;white-space:nowrap;color:#1890ff;font-size:10.8px">设备档案卡</div><div class="abs" style="left:10.20px;top:630.80px;line-height:16px;white-space:nowrap;color:#1890ff;font-size:10.8px">设备管理</div><svg class="abs" style="left:59.20px;top:636.80px" width="8" height="5" viewBox="0 0 8 5"><path d="M0.5,0.5 L4,4 L7.5,0.5" fill="none" stroke="#1890ff" stroke-width="0.9"/></svg><div class="abs" style="left:77.50px;top:630.80px;line-height:16px;white-space:nowrap;color:#1890ff;font-size:10.8px">申请/确认</div><svg class="abs" style="left:128.00px;top:636.80px" width="8" height="5" viewBox="0 0 8 5"><path d="M0.5,0.5 L4,4 L7.5,0.5" fill="none" stroke="#1890ff" stroke-width="0.9"/></svg><div class="abs" style="left:10.90px;top:674.55px;line-height:16px;white-space:nowrap;color:#1890ff;font-size:10.8px">详情</div><div class="abs" style="left:43.60px;top:674.55px;line-height:16px;white-space:nowrap;color:#1890ff;font-size:10.8px">设备档案卡</div><div class="abs" style="left:10.20px;top:699.55px;line-height:16px;white-space:nowrap;color:#1890ff;font-size:10.8px">设备管理</div><svg class="abs" style="left:59.20px;top:705.55px" width="8" height="5" viewBox="0 0 8 5"><path d="M0.5,0.5 L4,4 L7.5,0.5" fill="none" stroke="#1890ff" stroke-width="0.9"/></svg><div class="abs" style="left:77.50px;top:699.55px;line-height:16px;white-space:nowrap;color:#1890ff;font-size:10.8px">申请/确认</div><svg class="abs" style="left:128.00px;top:705.55px" width="8" height="5" viewBox="0 0 8 5"><path d="M0.5,0.5 L4,4 L7.5,0.5" fill="none" stroke="#1890ff" stroke-width="0.9"/></svg></div>
<div class="abs" style="left:1628.00px;top:195.20px;width:15.00px;height:676.80px;background:#f1f1f1"></div>
<div class="abs" style="left:1628.00px;top:195.20px;width:15.00px;height:39.80px;background:#f5f7fa;border-bottom:1px solid #dfe3ea"></div>
<svg class="abs" style="left:1632px;top:244px" width="8" height="5" viewBox="0 0 8 5"><path d="M0,5 H8 L4,0.5 Z" fill="#909090"/></svg>
<div class="abs" style="left:1632.00px;top:257.00px;width:8.50px;height:552.00px;background:#8c8c8c;border-radius:4.5px"></div>
<svg class="abs" style="left:1632.5px;top:860px" width="8" height="5" viewBox="0 0 8 5"><path d="M0,0 H8 L4,4.5 Z" fill="#909090"/></svg>
<div class="abs" style="left:25.00px;top:873.00px;width:1616.50px;height:13.00px;background:#fff"></div>
<svg class="abs" style="left:34px;top:877px" width="5" height="8" viewBox="0 0 5 8"><path d="M5,0 V8 L0.5,4 Z" fill="#909090"/></svg>
<div class="abs" style="left:48.00px;top:876.50px;width:1100.00px;height:9.00px;background:#8c8c8c;border-radius:4.5px"></div>
<svg class="abs" style="left:1615.5px;top:877px" width="5" height="8" viewBox="0 0 5 8"><path d="M0,0 V8 L4.5,4 Z" fill="#909090"/></svg>
<div class="abs" style="left:42.00px;top:904.00px;line-height:16px;white-space:nowrap;color:#4a4c50">共 1476 条</div>
<div class="abs" style="left:112.40px;top:899.00px;width:89.40px;height:24.40px;background:#fff;border:1px solid #dcdfe6;border-radius:3px"></div>
<div class="abs" style="left:129.00px;top:903.50px;line-height:16px;white-space:nowrap;color:#4a4c50">10条/页</div>
<svg class="abs" style="left:186px;top:909px" width="8" height="5" viewBox="0 0 8 5"><path d="M0.5,0.5 L4,4 L7.5,0.5" fill="none" stroke="#c0c4cc" stroke-width="0.9"/></svg>
<div class="abs" style="left:219.00px;top:899.00px;width:27.00px;height:24.40px;background:#f4f4f5;border-radius:2px"></div>
<div class="abs" style="left:1620.00px;top:869.90px;width:44.8px;height:44.8px;border-radius:50%;background:rgba(255,255,255,.1);box-shadow:0 0 3px rgba(0,0,0,.18)"></div>
<svg class="abs" style="left:1628.5px;top:880.5px" width="28" height="25" viewBox="0 0 28 25"><g fill="none" stroke="#1e88c8" stroke-width="2.8"><path d="M13,1.6 H6.5 A2.2,2.2 0 0 0 4.3,3.8 V13.5 A2.2,2.2 0 0 0 6.5,15.7 H13"/><path d="M15.5,1.6 H19.5 A2.2,2.2 0 0 1 21.7,3.8 V12.5"/></g><path d="M1.6,8.5 V12.5 M25.6,8.5 V12.5" stroke="#1e88c8" stroke-width="2.2"/><circle cx="10" cy="9.4" r="1.4" fill="#1e88c8"/><circle cx="16" cy="9.4" r="1.4" fill="#1e88c8"/><path d="M14,24.5 L17.6,15 H19.9 L23.5,24.5 H21.3 L20.6,22.4 H16.9 L16.2,24.5 Z M17.5,20.6 H20 L18.75,17 Z" fill="#1e88c8"/><rect x="24.2" y="15" width="2.3" height="9.5" fill="#1e88c8"/></svg></div>
  <div id="overlay"></div>
  <div id="modal"><div class="abs" style="left:17.50px;top:18.00px;line-height:22px;font-size:16.2px;color:#303133">设备详情</div>
<svg class="abs" style="left:995.70px;top:21.60px" width="8.6" height="8.6" viewBox="0 0 10 10"><path d="M0.5,0.5 L9.5,9.5 M9.5,0.5 L0.5,9.5" stroke="#909399" stroke-width="1.3"/></svg>
<div class="card" style="left:18.20px;top:49.50px;width:989.5px;height:170.50px"></div><div class="abs" style="left:28.50px;top:70.70px;width:970px;height:1px;background:#dcdfe6"></div><div class="abs sect" style="left:462.90px;top:61.20px;width:100px;text-align:center;line-height:20px"><span style="background:#fff;padding:0 18px">基本信息</span></div>
<div class="ib" style="left:32.20px;top:94.30px;width:259.20px;height:32.50px;line-height:30.50px"><span class="lb" style="width:63px;">管理编号:</span><span class="vl" style="">AQ-008</span></div>
<div class="ib" style="left:301.40px;top:94.30px;width:259.20px;height:32.50px;line-height:30.50px"><span class="lb" style="width:63px;">设备名称:</span><span class="vl" style="">安全网、安全带综合参数测试仪</span></div>
<div class="ib" style="left:570.30px;top:94.30px;width:259.20px;height:32.50px;line-height:30.50px"><span class="lb" style="width:63px;">规格型号:</span><span class="vl" style="">HX-720</span></div>
<div class="ib" style="left:32.20px;top:133.80px;width:259.20px;height:32.50px;line-height:30.50px"><span class="lb" style="width:63px;">制造厂商:</span><span class="vl" style="">沈阳合兴检测设备有限公司</span></div>
<div class="ib" style="left:301.40px;top:133.80px;width:259.20px;height:32.50px;line-height:30.50px"><span class="lb" style="width:63px;">出厂编号:</span><span class="vl" style="">Y2051111</span></div>
<div class="ib" style="left:570.30px;top:133.80px;width:259.20px;height:32.50px;line-height:30.50px"><span class="lb" style="width:63px;">数量单位:</span><span class="vl" style="">1 台</span></div>
<div class="ib" style="left:32.20px;top:172.70px;width:259.20px;height:32.50px;line-height:30.50px"><span class="lb" style="width:63px;">量程:</span><span class="vl" style="">/</span></div>
<div class="ib" style="left:301.40px;top:172.70px;width:259.20px;height:32.50px;line-height:30.50px"><span class="lb" style="width:63px;">量程精度:</span><span class="vl" style="">/</span></div>
<div class="abs" style="left:842.00px;top:93.20px;width:155.4px;height:91.4px;background:#fff;border:1px solid #e6e6e6;box-shadow:0 2px 6px rgba(0,0,0,.15)"></div>
<svg class="abs" style="left:875.10px;top:93.80px" width="90" height="90" viewBox="0 0 90 90">
<defs><linearGradient id="sky" x1="0" y1="0" x2="0.6" y2="1"><stop offset="0" stop-color="#e2e7ec"/><stop offset="0.55" stop-color="#bfc4cb"/><stop offset="1" stop-color="#a3a8b0"/></linearGradient>
<clipPath id="latc"><rect x="0" y="0" width="22" height="44"/></clipPath></defs>
<rect width="90" height="90" fill="url(#sky)"/>
<path d="M0,0 H25 L37,4 L52,11 L66,23 L70,38 L72,52 L73,60 V90 H0 Z" fill="#a9a6a0"/>
<rect x="0" y="0" width="22" height="44" fill="#b0b0ad"/>
<g clip-path="url(#latc)"><path d="M-56,0 L-12,44 M-12,0 L-56,44 M-49,0 L-5,44 M-5,0 L-49,44 M-42,0 L2,44 M2,0 L-42,44 M-35,0 L9,44 M9,0 L-35,44 M-28,0 L16,44 M16,0 L-28,44 M-21,0 L23,44 M23,0 L-21,44 M-14,0 L30,44 M30,0 L-14,44 M-7,0 L37,44 M37,0 L-7,44 M0,0 L44,44 M44,0 L0,44 M7,0 L51,44 M51,0 L7,44 M14,0 L58,44 M58,0 L14,44 M21,0 L65,44 M65,0 L21,44 M28,0 L72,44 M72,0 L28,44 M35,0 L79,44 M79,0 L35,44 M42,0 L86,44 M86,0 L42,44 M49,0 L93,44 M93,0 L49,44 M56,0 L100,44 M100,0 L56,44 M63,0 L107,44 M107,0 L63,44" stroke="#5a5955" stroke-width="0.9" opacity="0.75"/></g>
<rect x="21" y="0" width="5" height="17" fill="#55534f"/>
<rect x="28" y="5" width="2.2" height="3" fill="#6aa6d2"/><rect x="27" y="14" width="2.2" height="3" fill="#6aa6d2"/><rect x="27" y="25" width="2.2" height="3" fill="#6aa6d2"/><rect x="33" y="6" width="2.2" height="3" fill="#6aa6d2"/><rect x="40" y="12" width="2.2" height="3" fill="#6aa6d2"/><rect x="44" y="17" width="2.2" height="3" fill="#6aa6d2"/><rect x="49" y="15" width="2.2" height="3" fill="#6aa6d2"/><rect x="53" y="20" width="2.2" height="3" fill="#6aa6d2"/><rect x="45" y="25" width="2.2" height="3" fill="#6aa6d2"/><rect x="50" y="26" width="2.2" height="3" fill="#6aa6d2"/><rect x="55" y="28" width="2.2" height="3" fill="#6aa6d2"/><rect x="60" y="31" width="2.2" height="3" fill="#6aa6d2"/><rect x="48" y="33" width="2.2" height="3" fill="#6aa6d2"/><rect x="54" y="35" width="2.2" height="3" fill="#6aa6d2"/><rect x="59" y="38" width="2.2" height="3" fill="#6aa6d2"/><rect x="64" y="40" width="2.2" height="3" fill="#6aa6d2"/><rect x="43" y="38" width="2.2" height="3" fill="#6aa6d2"/><rect x="62" y="24" width="2.2" height="3" fill="#6aa6d2"/><rect x="66" y="33" width="2.2" height="3" fill="#6aa6d2"/>
<rect x="32" y="11" width="10" height="9" fill="#5d5853"/><rect x="30" y="22" width="12" height="30" fill="#8f8b84"/>
<rect x="43" y="47" width="29" height="18" fill="#c9cdcd"/>
<path d="M72,52 Q80,46 90,48 V63 H72 Z" fill="#74886a"/>
<rect x="72" y="62" width="18" height="10" fill="#6a6a60"/>
<path d="M0,44 L15,50 V90 H0 Z" fill="#c9ccce"/>
<path d="M15,50 L19,48 V88 L15,90 Z" fill="#4a4845"/>
<path d="M19,48 L23,47 V86 L19,88 Z" fill="#c4c4c2"/>
<rect x="23" y="55" width="20" height="28" fill="#56524c"/>
<path d="M23,84 L90,72 V90 H23 Z" fill="#b1a793"/>
<g stroke="#9c9e9e" stroke-width="1.2" fill="none"><path d="M23,56 H43 M24,62 H43 M25,55 V90 M41,44 V84 M26,82 L42,80 M24,86 L42,84 M43,60 L72,55 M44,65 L72,62 M52,58 V90 M60,57 V86 M71,55 V84 M78,62 V88 M86,64 V90 M50,86 L72,78 M72,78 L90,82"/></g>
<rect x="33" y="70" width="2.2" height="9" fill="#c9aa35"/>
</svg>
<div class="card" style="left:18.20px;top:230.50px;width:989.5px;height:93.00px"></div><div class="abs" style="left:28.50px;top:251.50px;width:970px;height:1px;background:#dcdfe6"></div><div class="abs sect" style="left:462.90px;top:242.00px;width:100px;text-align:center;line-height:20px"><span style="background:#fff;padding:0 18px">资产信息</span></div>
<div class="ib" style="left:28.20px;top:275.60px;width:316.60px;height:32.40px;line-height:30.40px"><span class="lb" style="width:88.2px;">固定资产编号:</span><span class="vl" style=""></span></div>
<div class="ib" style="left:354.20px;top:275.60px;width:316.60px;height:32.40px;line-height:30.40px"><span class="lb" style="width:88.2px;">固定资产类型:</span><span class="vl" style="">固定资产</span></div>
<div class="card" style="left:18.20px;top:333.60px;width:989.5px;height:92.40px"></div><div class="abs" style="left:28.50px;top:354.50px;width:970px;height:1px;background:#dcdfe6"></div><div class="abs sect" style="left:462.90px;top:345.00px;width:100px;text-align:center;line-height:20px"><span style="background:#fff;padding:0 18px">状态信息</span></div>
<div class="ib" style="left:28.20px;top:378.30px;width:316.60px;height:32.40px;line-height:30.40px"><span class="lb" style="width:63.0px;">设备状态:</span><span class="vl" style="">正常</span></div>
<div class="ib" style="left:354.20px;top:378.30px;width:316.60px;height:32.40px;line-height:30.40px"><span class="lb" style="width:100.8px;">是否仅入库设备:</span><span class="vl" style="">否</span></div>
<div class="card" style="left:18.20px;top:437.00px;width:989.5px;height:249.00px"></div><div class="abs" style="left:28.50px;top:457.30px;width:970px;height:1px;background:#dcdfe6"></div><div class="abs sect" style="left:462.90px;top:447.80px;width:100px;text-align:center;line-height:20px"><span style="background:#fff;padding:0 18px">校准信息</span></div>
<div class="ib" style="left:28.20px;top:481.60px;width:316.60px;height:32.40px;line-height:30.40px"><span class="lb" style="width:75.6px;">是否需校准:</span><span class="vl" style="">校准</span></div>
<div class="ib" style="left:354.20px;top:481.60px;width:316.60px;height:32.40px;line-height:30.40px"><span class="lb" style="width:63.0px;">校准类型:</span><span class="vl" style="">校准</span></div>
<div class="ib" style="left:680.20px;top:481.60px;width:316.60px;height:32.40px;line-height:30.40px"><span class="lb" style="width:63.0px;">校准单位:</span><span class="vl" style="">深圳市南科计量检测集团有限公司</span></div>
<div class="ib" style="left:28.20px;top:520.50px;width:316.60px;height:32.40px;line-height:30.40px"><span class="lb" style="width:63.0px;">证书编号:</span><span class="vl" style="">NTG241104296</span></div>
<div class="ib" style="left:354.20px;top:520.50px;width:316.60px;height:32.40px;line-height:30.40px"><span class="lb" style="width:63.0px;">校准日期:</span><span class="vl" style="">2024-11-27</span></div>
<div class="ib" style="left:680.20px;top:520.50px;width:316.60px;height:32.40px;line-height:30.40px"><span class="lb" style="width:88.2px;">校准到期日期:</span><span class="vl" style="">2025-11-26</span></div>
<div class="ib" style="left:28.20px;top:559.80px;width:316.60px;height:32.40px;line-height:30.40px"><span class="lb" style="width:63.0px;">校准周期:</span><span class="vl" style="">12个月</span></div>
<div class="ib" style="left:354.20px;top:559.80px;width:316.60px;height:32.40px;line-height:30.40px"><span class="lb" style="width:63.0px;">校准判断:</span><span class="vl" style="">/</span></div>
<div class="ib" style="left:680.20px;top:559.80px;width:316.60px;height:32.40px;line-height:30.40px"><span class="lb" style="width:63.0px;">证书编号:</span><span class="vl" style="">NTG241104296</span></div>
<div class="ib" style="left:28.70px;top:598.70px;width:641.9px;height:72.8px"></div>
<div class="abs lb" style="left:37.50px;top:606.60px;line-height:16px">校准附件:</div>
<div class="abs vl" style="left:37.50px;top:635.40px;line-height:16px">AQ-008 安全网、安全带综合参数测试仪.pdf</div>
<div class="abs" style="left:598.50px;top:635.40px;line-height:16px;color:#409eff;font-size:11.7px">查看</div>
<div class="abs" style="left:638.80px;top:635.40px;line-height:16px;color:#409eff;font-size:11.7px">下载</div>
<div class="ib" style="left:680.50px;top:598.60px;width:316px;height:39.7px"></div>
<div class="abs lb" style="left:688.30px;top:609.50px;line-height:16px">查看更多:</div>
<div class="abs" style="left:939.40px;top:606.40px;width:49.3px;height:24.1px;border:1px solid #dcdfe6;border-radius:3px;background:#fff;text-align:center;line-height:22px;font-size:10.8px;color:#606266">查看</div>
<div class="card" style="left:18.20px;top:696.30px;width:989.5px;height:131.50px"></div><div class="abs" style="left:28.50px;top:718.90px;width:970px;height:1px;background:#dcdfe6"></div><div class="abs sect" style="left:462.90px;top:709.40px;width:100px;text-align:center;line-height:20px"><span style="background:#fff;padding:0 18px">使用信息</span></div>
<div class="ib" style="left:28.20px;top:741.30px;width:316.60px;height:32.40px;line-height:30.40px"><span class="lb" style="width:63.0px;">放置地点:</span><span class="vl" style="">室外</span></div>
<div class="ib" style="left:354.20px;top:741.30px;width:316.60px;height:32.40px;line-height:30.40px"><span class="lb" style="width:63.0px;">责任部门:</span><span class="vl" style="">特材组</span></div>
<div class="ib" style="left:680.20px;top:741.30px;width:316.60px;height:32.40px;line-height:30.40px"><span class="lb" style="width:63px;">保管人:</span><span class="vl" style="">杨作星</span></div>
<div class="ib" style="left:28.20px;top:780.60px;width:316.60px;height:32.40px;line-height:30.40px"><span class="lb" style="width:63.0px;">使用范围:</span><span class="vl" style="">安全网、安全带</span></div>
<div class="ib" style="left:354.20px;top:780.60px;width:316.60px;height:32.40px;line-height:30.40px"><span class="lb" style="width:63.0px;">检测参数:</span><span class="vl" style="display:inline-block;vertical-align:top;max-width:236px;overflow:hidden;text-overflow:ellipsis;white-space:nowrap">区域限制用安全带系统性能（整体动态性能）</span></div>
<div class="ib" style="left:680.20px;top:780.60px;width:316.60px;height:32.40px;line-height:30.40px"><span class="lb" style="width:63.0px;">试验依据:</span><span class="vl" style="">GB 5725-2009《安全网》</span></div>
<div class="card" style="left:18.20px;top:838.30px;width:989.5px;height:150.70px"></div><div class="abs" style="left:28.50px;top:860.50px;width:970px;height:1px;background:#dcdfe6"></div><div class="abs sect" style="left:462.90px;top:851.00px;width:100px;text-align:center;line-height:20px"><span style="background:#fff;padding:0 18px">购置信息</span></div>
<div class="ib" style="left:28.20px;top:883.70px;width:316.60px;height:33.10px;line-height:31.10px"><span class="lb" style="width:63.0px;">购置日期:</span><span class="vl" style="">2020-12-31</span></div>
<div class="ib" style="left:354.20px;top:883.70px;width:316.60px;height:33.10px;line-height:31.10px"><span class="lb" style="width:63.0px;">保修日期:</span><span class="vl" style=""></span></div>
<div class="ib" style="left:680.20px;top:883.70px;width:316.60px;height:33.10px;line-height:31.10px"><span class="lb" style="width:84.0px;">采购金额(元):</span><span class="vl" style="">110619.47</span></div></div>
</div>
</body></html>
